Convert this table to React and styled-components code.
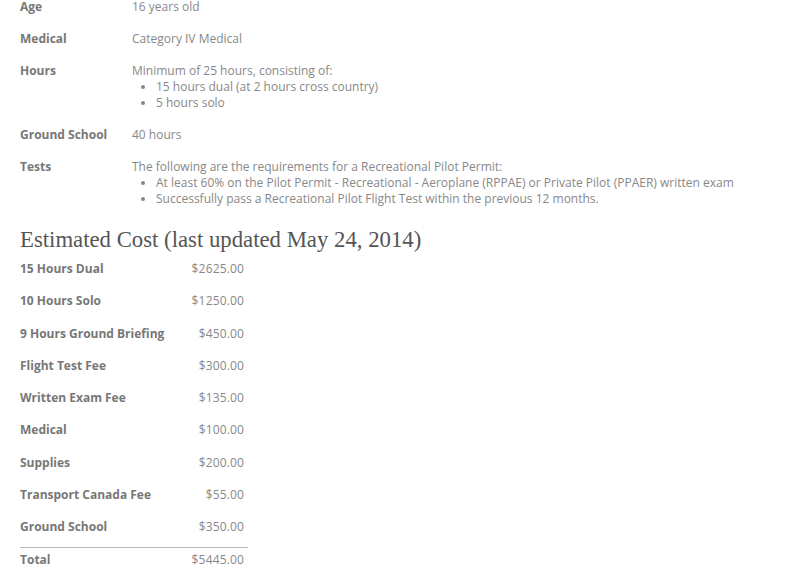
import React from "react";
import styled, { createGlobalStyle, css } from "styled-components";

const Global = createGlobalStyle`
  html, body { margin: 0; padding: 0; background: #fff; }
  body { font-family: "Open Sans", "Noto Sans", sans-serif; font-size: 12px; color: #888; }
`;

const Page = styled.div`
  padding: 0 20px;
  margin-top: -1px;
`;

const Requirements = styled.div`
  display: flex;
  flex-direction: column;
  gap: 16px;
`;

const ReqRow = styled.div`
  display: grid;
  grid-template-columns: 112px 1fr;
  line-height: 16px;
`;

const Label = styled.div`
  font-weight: 700;
  color: #777;
`;

const Value = styled.div`
  color: #888;
`;

const Bullets = styled.ul`
  margin: 0;
  padding-left: 24px;
  li { line-height: 16px; }
`;

const Heading = styled.h2`
  font-family: "Liberation Serif", "DejaVu Serif", serif;
  font-weight: 400;
  font-size: 22.75px;
  color: #555;
  margin: 20px 0 8px;
  line-height: 26px;
`;

const CostTable = styled.div`
  width: 228px;
  display: grid;
  grid-template-columns: 1fr auto;
  row-gap: 16px;
  line-height: 16.25px;
`;

const totalCell = css`
  border-top: 1px solid #bbb;
  margin-top: -4px;
  padding-top: 4px;
`;

const CostLabel = styled.div`
  font-weight: 700;
  color: #777;
  ${(p) => p.$total && totalCell}
`;

const CostValue = styled.div`
  text-align: right;
  padding-right: 4px;
  color: #888;
  letter-spacing: 0.15px;
  ${(p) => p.$total && totalCell}
`;

const costs = [
  ["15 Hours Dual", "$2625.00"],
  ["10 Hours Solo", "$1250.00"],
  ["9 Hours Ground Briefing", "$450.00"],
  ["Flight Test Fee", "$300.00"],
  ["Written Exam Fee", "$135.00"],
  ["Medical", "$100.00"],
  ["Supplies", "$200.00"],
  ["Transport Canada Fee", "$55.00"],
  ["Ground School", "$350.00"],
];

export default function App() {
  return (
    <Page>
      <Global />
      <Requirements>
        <ReqRow>
          <Label>Age</Label>
          <Value>16 years old</Value>
        </ReqRow>
        <ReqRow>
          <Label>Medical</Label>
          <Value>Category IV Medical</Value>
        </ReqRow>
        <ReqRow>
          <Label>Hours</Label>
          <Value>
            Minimum of 25 hours, consisting of:
            <Bullets>
              <li>15 hours dual (at 2 hours cross country)</li>
              <li>5 hours solo</li>
            </Bullets>
          </Value>
        </ReqRow>
        <ReqRow>
          <Label>Ground School</Label>
          <Value>40 hours</Value>
        </ReqRow>
        <ReqRow>
          <Label>Tests</Label>
          <Value>
            The following are the requirements for a Recreational Pilot Permit:
            <Bullets>
              <li>At least 60% on the Pilot Permit - Recreational - Aeroplane (RPPAE) or Private Pilot (PPAER) written exam</li>
              <li>Successfully pass a Recreational Pilot Flight Test within the previous 12 months.</li>
            </Bullets>
          </Value>
        </ReqRow>
      </Requirements>
      <Heading>Estimated Cost (last updated May 24, 2014)</Heading>
      <CostTable>
        {costs.map(([l, v]) => (
          <React.Fragment key={l}>
            <CostLabel>{l}</CostLabel>
            <CostValue>{v}</CostValue>
          </React.Fragment>
        ))}
        <CostLabel $total>Total</CostLabel>
        <CostValue $total>$5445.00</CostValue>
      </CostTable>
    </Page>
  );
}
